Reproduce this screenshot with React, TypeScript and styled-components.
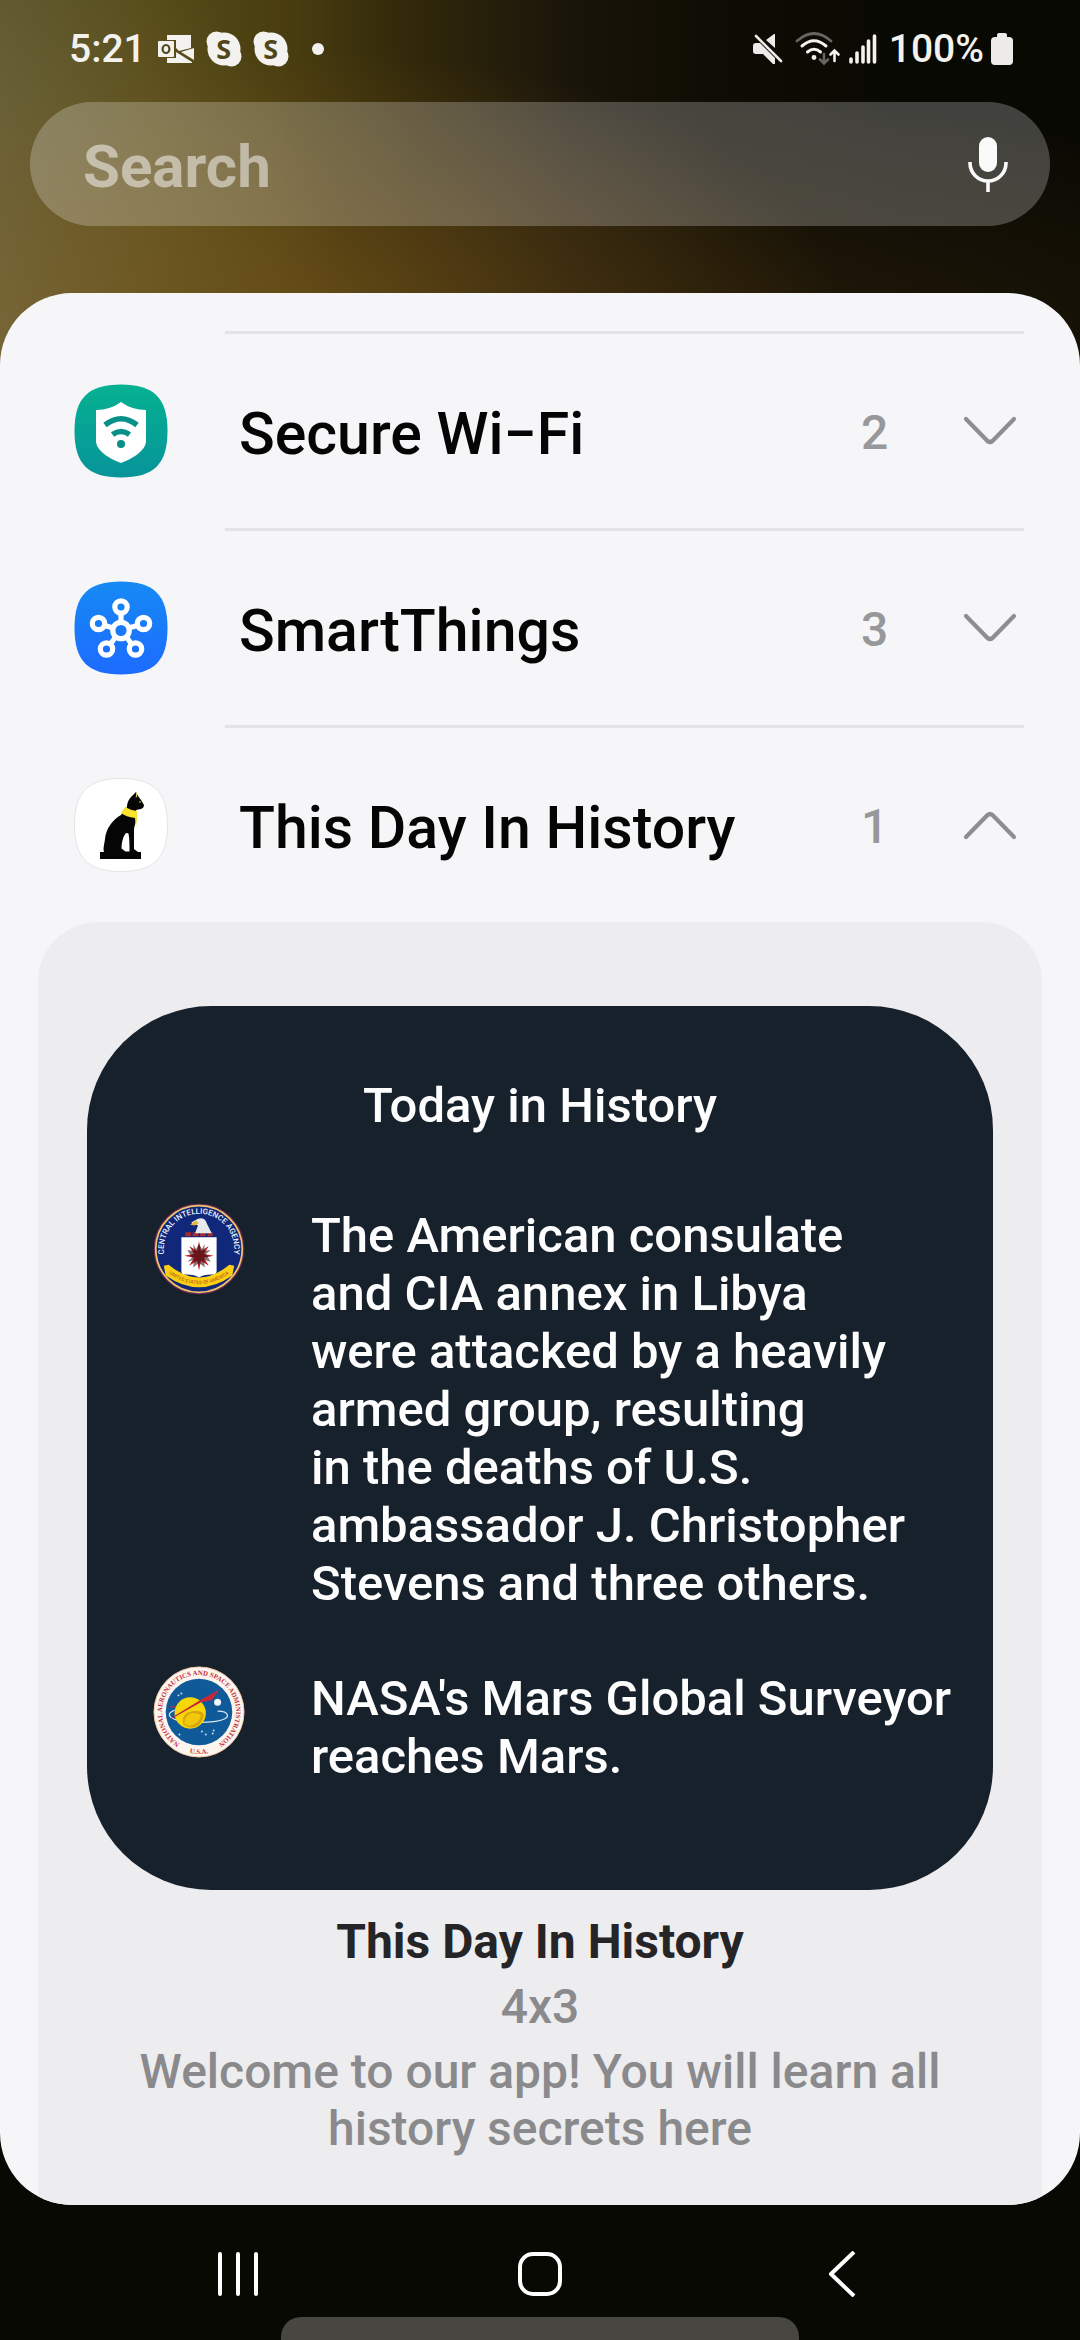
import React, { useState } from 'react';
import styled, { createGlobalStyle } from 'styled-components';

const Global = createGlobalStyle`
  * { box-sizing: border-box; }
  html, body, #root { height: 100%; }
  body { margin: 0; background: #090903; font-family: Roboto, "Noto Sans", sans-serif; }
  button { font: inherit; color: inherit; background: none; border: 0; padding: 0; margin: 0; cursor: pointer; }
  svg { display: block; flex: none; }
`;

const Screen = styled.div`
  display: flex;
  flex-direction: column;
  min-height: 100%;
  overflow: hidden;
  background-color: #090903;
  background-image:
    radial-gradient(520px 260px at 320px 310px, rgba(118, 86, 26, 0.65), rgba(118, 86, 26, 0)),
    radial-gradient(500px 560px at -140px 400px, rgba(150, 130, 85, 0.7), rgba(150, 130, 85, 0)),
    radial-gradient(640px 240px at 760px 340px, rgba(48, 34, 12, 0.65), rgba(48, 34, 12, 0)),
    linear-gradient(90deg, #57522a 0, #544a17 150px, #4a3e10 280px, #30270a 420px, #1a150a 570px, #0e0c03 720px, #090903 900px);
  background-size: 100% 420px;
  background-repeat: no-repeat;
`;

const StatusBar = styled.header`
  display: flex;
  align-items: center;
  justify-content: space-between;
  height: 98px;
  padding: 0 67px 0 69px;
  color: #f3f2ee;
  font-size: 39px;
  font-weight: 500;
`;

const StatusGroup = styled.div<{ $gap: number }>`
  display: flex;
  align-items: center;
  gap: ${(p) => p.$gap}px;
`;

const SearchBar = styled.form`
  display: flex;
  align-items: center;
  height: 124px;
  margin: 4px 30px 67px;
  padding: 0 42px 0 53px;
  border-radius: 62px;
  background: rgba(255, 255, 255, 0.23);
`;

const SearchInput = styled.input`
  flex: 1;
  min-width: 0;
  height: 84px;
  padding: 4px 0 0;
  border: 0;
  outline: 0;
  background: none;
  color: #fff;
  font: 700 60px/80px Roboto, sans-serif;
  &::placeholder { color: rgba(255, 255, 255, 0.5); opacity: 1; }
`;

const Sheet = styled.main`
  flex: 1;
  display: flex;
  flex-direction: column;
  padding-top: 38px;
  border-radius: 72px;
  overflow: hidden;
  background: #f6f6f8;
`;

const AppList = styled.ul`
  list-style: none;
  margin: 0;
  padding: 0;
`;

const AppItem = styled.li`
  &::before {
    content: "";
    display: block;
    height: 3px;
    margin: 0 56px 0 225px;
    background: #e3e3e5;
  }
`;

const AppRow = styled.button`
  display: grid;
  grid-template-columns: 94px 1fr 102px 54px;
  align-items: center;
  width: 100%;
  height: 194px;
  padding: 0 63px 0 74px;
  text-align: left;
`;

const AppName = styled.span`
  padding: 6px 0 0 71px;
  color: #050505;
  font-size: 59px;
  font-weight: 500;
  line-height: 72px;
`;

const Count = styled.span`
  padding-top: 2px;
  color: #98989b;
  font-size: 48px;
  font-weight: 500;
`;

const Panel = styled.section`
  flex: 1;
  margin: 0 38px;
  padding: 84px 49px 40px;
  border-radius: 60px 60px 0 0;
  background: #ededef;
`;

const Card = styled.article`
  padding: 71px 30px 104px 66px;
  border-radius: 124px;
  background: #17212b;
  color: #fdfdfd;
  font-size: 49px;
  font-weight: 500;
  line-height: 58px;
`;

const CardTitle = styled.h2`
  margin: 0 0 68px;
  padding-right: 36px;
  font: inherit;
  text-align: center;
`;

const Events = styled.ul`
  display: grid;
  gap: 53px;
  list-style: none;
  margin: 0;
  padding: 0;
`;

const EventItem = styled.li`
  display: grid;
  grid-template-columns: 92px 1fr;
  gap: 66px;
`;

const EventText = styled.p`
  margin: 0;
  padding-top: 4px;
  white-space: pre-line;
`;

const Caption = styled.div`
  padding-top: 23px;
  text-align: center;
  color: #8a8a8d;
  font-size: 48px;
  font-weight: 500;
  line-height: 57px;
`;

const CaptionTitle = styled.h3`
  margin: 0 0 8px;
  color: #252528;
  font: inherit;
  font-weight: 700;
`;

const CaptionText = styled.p`
  margin: 0 0 8px;
`;

const NavBar = styled.nav`
  display: grid;
  grid-template-columns: repeat(3, 302px);
  justify-content: center;
  justify-items: center;
  align-items: center;
  height: 135px;
  padding-top: 3px;
`;

const Handle = styled.div`
  position: fixed;
  bottom: 0;
  left: 26%;
  right: 26%;
  height: 23px;
  border-radius: 20px 20px 0 0;
  background: #474641;
`;

const OutlookIcon = () => (
  <svg width="38" height="30" viewBox="0 0 38 30">
    <path d="M10 1h24v13L22 17 19 14V6H10zM37 14v12L24 18zM10 24h9v-6l16 10v1H10z" fill="#f3f2ee" />
    <rect x="1" y="7" width="16" height="16" rx="1" fill="#f3f2ee" />
    <ellipse cx="9" cy="15" rx="3.4" ry="4" fill="none" stroke="#51491a" strokeWidth="2.2" />
  </svg>
);

const SkypeBubble = styled.span`
  position: relative;
  display: grid;
  place-items: center;
  width: 36px;
  height: 36px;
  color: #51461a;
  font: 700 27px/36px "Open Sans", sans-serif;
  svg { position: absolute; inset: 0; }
  span { position: relative; }
`;

const SkypeIcon = () => (
  <SkypeBubble>
    <svg width="36" height="36" viewBox="0 0 36 36" fill="#f3f2ee">
      <circle cx="18" cy="18" r="16.5" />
      <circle cx="10.5" cy="10.5" r="10" />
      <circle cx="25.5" cy="25.5" r="10" />
    </svg>
    <span>S</span>
  </SkypeBubble>
);

const MoreDot = () => (
  <svg width="36" height="14" viewBox="0 0 36 14">
    <circle cx="18" cy="7" r="6" fill="#f3f2ee" />
  </svg>
);

const MuteIcon = () => (
  <svg width="36" height="30" viewBox="0 0 36 30">
    <path d="M1 12q0-3 3-3h4l15 15v6h-2L11 20H4q-3 0-3-3zM14 6l8-6h1v14z" fill="#ecebea" />
    <path d="M4 2l25 25" stroke="#ecebea" strokeWidth="2.6" strokeLinecap="round" />
  </svg>
);

const WifiIcon = () => (
  <svg width="46" height="34" viewBox="0 0 46 34" fill="none" strokeLinecap="round">
    <path d="M2 9Q19-6 36 9" stroke="#666561" strokeWidth="2.8" />
    <path d="M7 14q12-10.5 24 0M12.5 20q6.5-5.5 13 0" stroke="#f3f2ee" strokeWidth="3" />
    <circle cx="19" cy="25.5" r="2.4" fill="#f3f2ee" />
    <path d="M29 22v9M25 27.5l4 4 4-4" stroke="#666561" strokeWidth="2.6" />
    <path d="M39.5 29V19M35.5 22.5l4-4 4 4" stroke="#f3f2ee" strokeWidth="2.6" />
  </svg>
);

const SignalIcon = () => (
  <svg width="34" height="30" viewBox="0 0 34 30" stroke="#f3f2ee" strokeWidth="3.6" strokeLinecap="round">
    <path d="M3 25v3M9 19v9M15 13v15M20.5 7v21M26.5 2v26" />
  </svg>
);

const BatteryIcon = () => (
  <svg width="22" height="32" viewBox="0 0 22 32" fill="#ecebea">
    <rect x="6" width="10" height="8" rx="2" />
    <rect y="4" width="22" height="28" rx="4" />
  </svg>
);

const MicIcon = () => (
  <svg width="40" height="56" viewBox="0 0 40 56">
    <rect x="11" y="1" width="18" height="35" rx="9" fill="#fafafa" />
    <path d="M2 26v1a18 18 0 0 0 36 0v-1M20 45v11" fill="none" stroke="#fafafa" strokeWidth="3.6" />
  </svg>
);

const Chevron = ({ up }: { up?: boolean }) => (
  <svg width="54" height="30" viewBox="0 0 54 30" fill="none" stroke="#8e8e91" strokeWidth="4.2" strokeLinecap="round" strokeLinejoin="round">
    <path d={up ? 'M3 27L24.500 5q2.500-2 5 0L51 27' : 'M3 3l21.500 22q2.500 2 5 0L51 3'} />
  </svg>
);

const squircle = 'M47 0.5C80 0.5 93.5 14 93.5 47S80 93.5 47 93.5 0.5 80 0.5 47 14 0.5 47 0.5Z';

const SecureWifiIcon = () => (
  <svg width="94" height="94" viewBox="0 0 94 94">
    <defs>
      <linearGradient id="teal" x2="0" y2="1">
        <stop stopColor="#06b191" />
        <stop offset="1" stopColor="#07949a" />
      </linearGradient>
    </defs>
    <path d={squircle} fill="url(#teal)" />
    <path d="M47 18Q58 26 72 26v31c0 9-12 17-25 22-13-5-25-13-25-22V26Q36 26 47 18z" fill="#fff" />
    <path d="M31 41q16-12.5 32 0M38.5 50.5q8.500-6 17 0" fill="none" stroke="#078f89" strokeWidth="5.5" />
    <circle cx="47" cy="60" r="4" fill="#078f89" />
  </svg>
);

const SmartThingsIcon = () => (
  <svg width="94" height="94" viewBox="0 0 94 94">
    <defs>
      <linearGradient id="blue" x2="0" y2="1">
        <stop stopColor="#168af4" />
        <stop offset="1" stopColor="#1d6bff" />
      </linearGradient>
    </defs>
    <path d={squircle} fill="url(#blue)" />
    <g fill="none" stroke="#fff" strokeWidth="5.2">
      <circle cx="47" cy="49.5" r="8.2" />
      <circle cx="47" cy="26" r="6.2" />
      <circle cx="24.5" cy="42.5" r="6.2" />
      <circle cx="69.5" cy="42.5" r="6.2" />
      <circle cx="32.5" cy="68" r="6.2" />
      <circle cx="61.5" cy="68" r="6.2" />
      <path d="M47 32v9M30.5 44.5l9 2.5M63.5 44.5l-9 2.5M36.5 63l5-7M57.5 63l-5-7" />
    </g>
  </svg>
);

const CatIcon = () => (
  <svg width="94" height="94" viewBox="0 0 94 94">
    <path d={squircle} fill="#fff" stroke="#e4e4e4" />
    <path d="M62 14l-5 5c-3 3-4 7-4 10l-6 8c-9 5-15 14-16 24-1 7-2 9-1 13h-4v7h41v-7h-3l-4-3V53c0-6 3-10 3-16l-1-5 5-1c2-1 3-2 3-4l-3-5-3-4z" fill="#050505" />
    <path d="M51.5 55.5c-3 4-4 10-4 15l4 3h4c0-6 0-13-1-18q-1.5-1-3 0z" fill="#fff" />
    <path d="M51 29Q56 32 63 33v7l-1 10-1-10q-9-1-14-5z" fill="#fbe22c" />
    <path d="M62.5 15v4l-1 0M65 24h2" stroke="#d8c65a" strokeWidth="1" fill="none" />
  </svg>
);

const SealText = styled.text<{ $size: number }>`
  font: 500 ${(p) => p.$size}px Roboto, sans-serif;
`;

const SerifSealText = styled.text`
  font: 700 7px "Liberation Serif", serif;
`;

const CiaSeal = () => (
  <svg width="92" height="92" viewBox="0 0 94 94">
    <defs>
      <path id="ciaArc" d="M13.8 61A36 36 0 1 1 80.2 61" />
      <path id="ciaRibbon" d="M16 72Q47 94 78 72" />
    </defs>
    <circle cx="47" cy="47" r="45.5" fill="#10277a" stroke="#6e2756" strokeWidth="1.5" />
    <circle cx="47" cy="47" r="44.2" fill="none" stroke="#f0c468" strokeWidth="1.8" />
    <SealText $size={8} fill="#f0f4fb">
      <textPath href="#ciaArc" startOffset="50%" textAnchor="middle">CENTRAL INTELLIGENCE AGENCY</textPath>
    </SealText>
    <path d="M11 64l5-1q31 26 62 0l5 1-2 10q-34 24-68 0z" fill="#fbd013" />
    <SealText $size={5} fill="#c0621a">
      <textPath href="#ciaRibbon" startOffset="50%" textAnchor="middle">UNITED STATES OF AMERICA</textPath>
    </SealText>
    <path d="M29 35h36v35q0 3-5 3-9 0-13 3-4-3-13-3-5 0-5-3z" fill="#fff" />
    <path d="M33 32h28" stroke="#a12a35" strokeWidth="4" strokeDasharray="6 1.5" />
    <path d="M39 20l7-4q7-2 9 5l5 10H43l3-8z" fill="#e8e9ea" />
    <path d="M38 22l6-4 3 3-5 2z" fill="#e9b93c" />
    <g transform="translate(47 54)">
      <path d="M0-15L2-5 10-10 5-2 15 0 5 2 10 10 2 5 0 15-2 5-10 10-5 2-15 0-5-2-10-10-2-5z" fill="#b51a22" />
      <path d="M0-12L3-7 6-12 5-5 12-6 7-2 12 6 5 4 6 12 0 7-6 12-5 4-12 6-7 2-12-6-5-5-6-12-3-7z" fill="#3b1015" opacity="0.6" />
    </g>
  </svg>
);

const NasaSeal = () => (
  <svg width="92" height="92" viewBox="0 0 94 94">
    <defs>
      <path id="nasaArc" d="M30.4 81A37.8 37.8 0 1 1 63.6 81" />
      <path id="nasaBase" d="M30 86.5A43 43 0 0 0 64 86.5" />
    </defs>
    <circle cx="47" cy="47" r="46" fill="#fdf6ef" stroke="#f0c9a8" />
    <circle cx="47" cy="47" r="34" fill="#105a9a" />
    <SerifSealText fill="#c5303c">
      <textPath href="#nasaArc" startOffset="50%" textAnchor="middle">NATIONAL AERONAUTICS AND SPACE ADMINISTRATION</textPath>
    </SerifSealText>
    <SerifSealText fill="#c5303c">
      <textPath href="#nasaBase" startOffset="50%" textAnchor="middle">U.S.A.</textPath>
    </SerifSealText>
    <path d="M22 45c-10 4-6 10 12 12 22 2 44-1 42-7q-1-4-10-4" fill="none" stroke="#d6e5f2" strokeWidth="1.3" />
    <circle cx="38" cy="48" r="16" fill="#f8d706" />
    <path d="M31 60q-3-12 10-14 11-1 11 5-3 12-14 12z" fill="#d9a50c" />
    <path d="M32 59q0-10 9-11 7 0 8 3-3 9-12 10z" fill="#f1c90a" />
    <path d="M18 53.5L48 35 68 24 60 35 49 37 18 54.5zM17 41h7l-4 2z" fill="#c8283a" />
    <circle cx="66" cy="37" r="3.6" fill="#f2f6fa" />
    <g fill="#c9dcee">
      <circle cx="26" cy="30" r="1" /><circle cx="29" cy="28" r="1" /><circle cx="50" cy="67" r="1" />
      <circle cx="54" cy="70" r="1" /><circle cx="61" cy="69" r="1" /><circle cx="62" cy="66" r="1" /><circle cx="27" cy="70" r="1" />
    </g>
  </svg>
);

const RecentsIcon = () => (
  <svg width="42" height="44" viewBox="0 0 42 44" stroke="#fff" strokeWidth="4" strokeLinecap="round">
    <path d="M3 2v40M21 2v40M39 2v40" />
  </svg>
);

const HomeIcon = () => (
  <svg width="44" height="44" viewBox="0 0 44 44" fill="none" stroke="#fff" strokeWidth="4">
    <rect x="2" y="2" width="40" height="40" rx="13" />
  </svg>
);

const BackIcon = () => (
  <svg width="28" height="46" viewBox="0 0 28 46" fill="none" stroke="#fff" strokeWidth="4" strokeLinejoin="round">
    <path d="M26 1L3 23l23 22" />
  </svg>
);

const apps = [
  { name: 'Secure Wi\u2212Fi', count: 2, Icon: SecureWifiIcon },
  { name: 'SmartThings', count: 3, Icon: SmartThingsIcon },
  { name: 'This Day In History', count: 1, Icon: CatIcon },
];

const events = [
  {
    text: 'The American consulate\nand CIA annex in Libya\nwere attacked by a heavily\narmed group, resulting\nin the deaths of U.S.\nambassador J. Christopher\nStevens and three others.',
    Seal: CiaSeal,
  },
  { text: "NASA's Mars Global Surveyor\nreaches Mars.", Seal: NasaSeal },
];

export default function App() {
  const [open, setOpen] = useState('This Day In History');
  return (
    <Screen>
      <Global />
      <StatusBar>
        <StatusGroup $gap={11}>
          <span>5:21</span>
          <OutlookIcon />
          <SkypeIcon />
          <SkypeIcon />
          <MoreDot />
        </StatusGroup>
        <StatusGroup $gap={7}>
          <MuteIcon />
          <WifiIcon />
          <SignalIcon />
          <span>100%</span>
          <BatteryIcon />
        </StatusGroup>
      </StatusBar>
      <SearchBar role="search">
        <SearchInput type="text" placeholder="Search" aria-label="Search" />
        <button type="button" aria-label="Voice search"><MicIcon /></button>
      </SearchBar>
      <Sheet>
        <AppList>
          {apps.map(({ name, count, Icon }) => (
            <AppItem key={name}>
              <AppRow type="button" aria-expanded={open === name} onClick={() => setOpen(open === name ? '' : name)}>
                <Icon />
                <AppName>{name}</AppName>
                <Count>{count}</Count>
                <Chevron up={open === name} />
              </AppRow>
            </AppItem>
          ))}
        </AppList>
        {open === 'This Day In History' && (
          <Panel>
            <Card>
              <CardTitle>Today in History</CardTitle>
              <Events>
                {events.map(({ text, Seal }) => (
                  <EventItem key={text}>
                    <Seal />
                    <EventText>{text}</EventText>
                  </EventItem>
                ))}
              </Events>
            </Card>
            <Caption>
              <CaptionTitle>This Day In History</CaptionTitle>
              <CaptionText>4x3</CaptionText>
              <CaptionText>Welcome to our app! You will learn all history secrets here</CaptionText>
            </Caption>
          </Panel>
        )}
      </Sheet>
      <NavBar aria-label="System navigation">
        <button type="button" aria-label="Recent apps"><RecentsIcon /></button>
        <button type="button" aria-label="Home"><HomeIcon /></button>
        <button type="button" aria-label="Back"><BackIcon /></button>
      </NavBar>
      <Handle />
    </Screen>
  );
}
